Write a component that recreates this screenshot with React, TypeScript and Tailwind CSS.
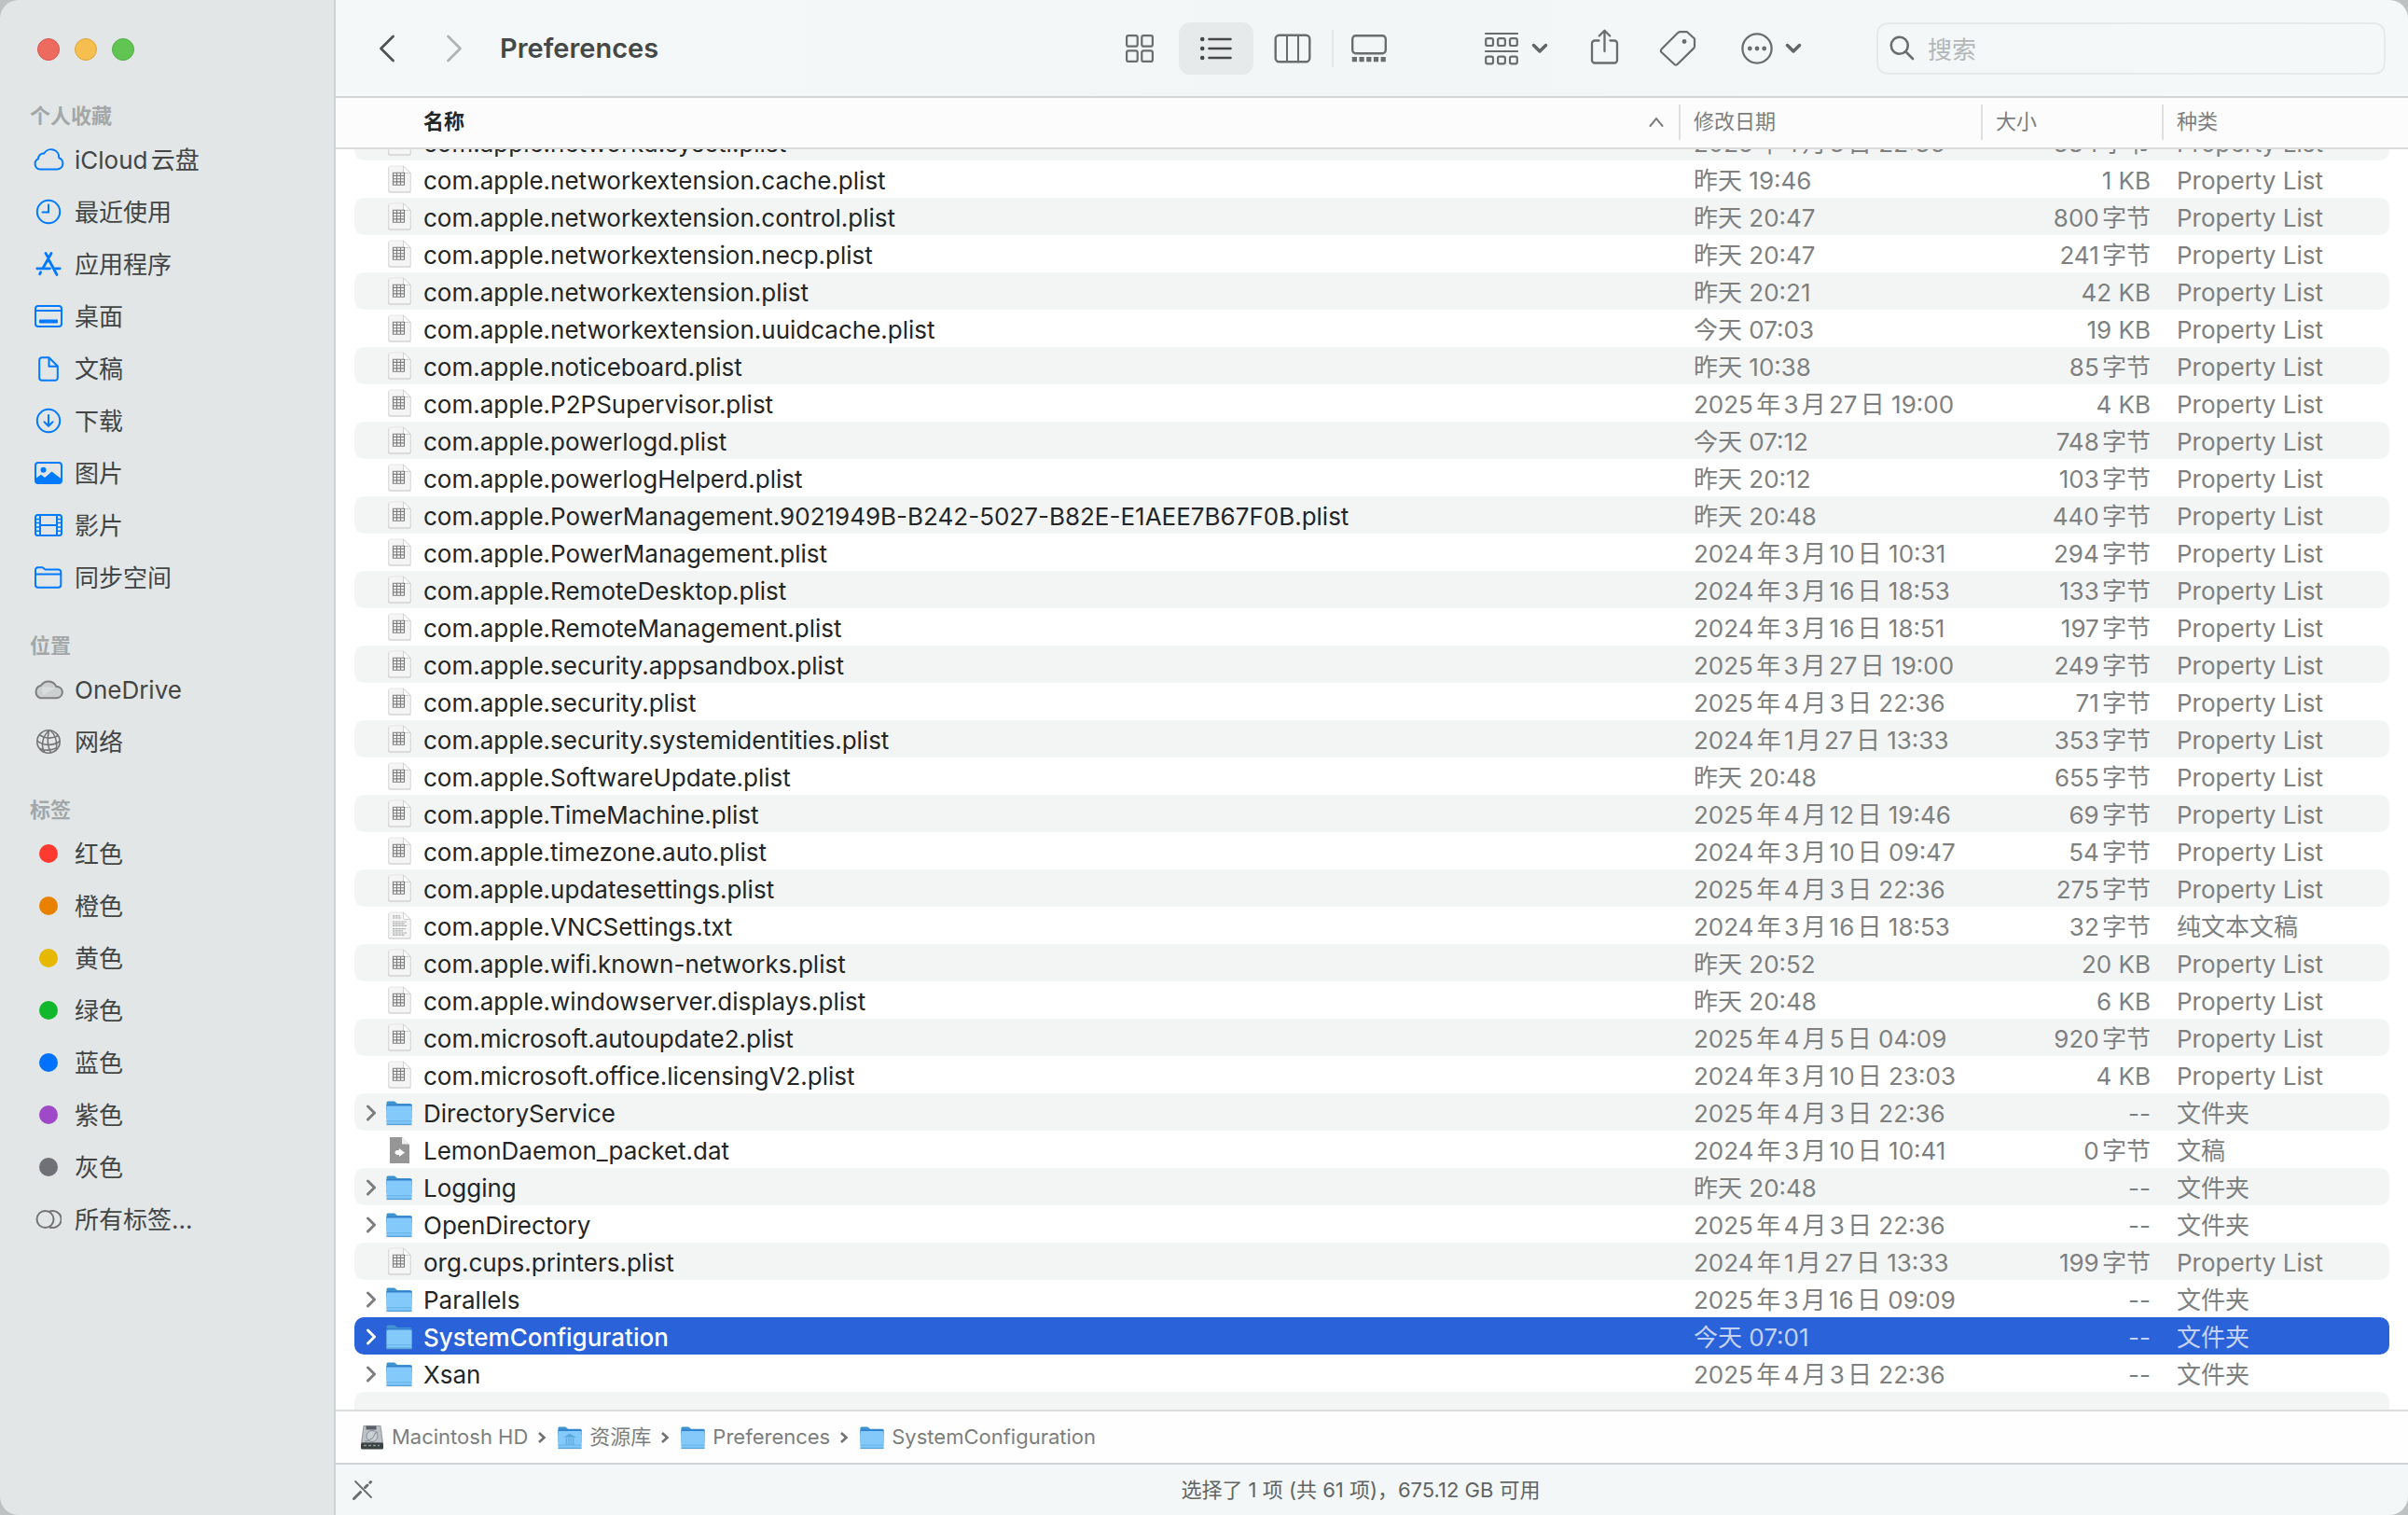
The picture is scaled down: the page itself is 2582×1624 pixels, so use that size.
import { useLayoutEffect, useRef, useState } from "react";
import clsx from "clsx";

type Kind = "plist" | "text" | "data" | "folder";

type FileRow = {
  name: string;
  date: string;
  size: string;
  kind: Kind;
};

const kindLabels: Record<Kind, string> = {
  plist: "Property List",
  text: "纯文本文稿",
  data: "文稿",
  folder: "文件夹",
};

const files: FileRow[] = [
  { name: "com.apple.networkd.sysctl.plist", date: "2025年4月3日 22:36", size: "384字节", kind: "plist" },
  { name: "com.apple.networkextension.cache.plist", date: "昨天 19:46", size: "1 KB", kind: "plist" },
  { name: "com.apple.networkextension.control.plist", date: "昨天 20:47", size: "800字节", kind: "plist" },
  { name: "com.apple.networkextension.necp.plist", date: "昨天 20:47", size: "241字节", kind: "plist" },
  { name: "com.apple.networkextension.plist", date: "昨天 20:21", size: "42 KB", kind: "plist" },
  { name: "com.apple.networkextension.uuidcache.plist", date: "今天 07:03", size: "19 KB", kind: "plist" },
  { name: "com.apple.noticeboard.plist", date: "昨天 10:38", size: "85字节", kind: "plist" },
  { name: "com.apple.P2PSupervisor.plist", date: "2025年3月27日 19:00", size: "4 KB", kind: "plist" },
  { name: "com.apple.powerlogd.plist", date: "今天 07:12", size: "748字节", kind: "plist" },
  { name: "com.apple.powerlogHelperd.plist", date: "昨天 20:12", size: "103字节", kind: "plist" },
  { name: "com.apple.PowerManagement.9021949B-B242-5027-B82E-E1AEE7B67F0B.plist", date: "昨天 20:48", size: "440字节", kind: "plist" },
  { name: "com.apple.PowerManagement.plist", date: "2024年3月10日 10:31", size: "294字节", kind: "plist" },
  { name: "com.apple.RemoteDesktop.plist", date: "2024年3月16日 18:53", size: "133字节", kind: "plist" },
  { name: "com.apple.RemoteManagement.plist", date: "2024年3月16日 18:51", size: "197字节", kind: "plist" },
  { name: "com.apple.security.appsandbox.plist", date: "2025年3月27日 19:00", size: "249字节", kind: "plist" },
  { name: "com.apple.security.plist", date: "2025年4月3日 22:36", size: "71字节", kind: "plist" },
  { name: "com.apple.security.systemidentities.plist", date: "2024年1月27日 13:33", size: "353字节", kind: "plist" },
  { name: "com.apple.SoftwareUpdate.plist", date: "昨天 20:48", size: "655字节", kind: "plist" },
  { name: "com.apple.TimeMachine.plist", date: "2025年4月12日 19:46", size: "69字节", kind: "plist" },
  { name: "com.apple.timezone.auto.plist", date: "2024年3月10日 09:47", size: "54字节", kind: "plist" },
  { name: "com.apple.updatesettings.plist", date: "2025年4月3日 22:36", size: "275字节", kind: "plist" },
  { name: "com.apple.VNCSettings.txt", date: "2024年3月16日 18:53", size: "32字节", kind: "text" },
  { name: "com.apple.wifi.known-networks.plist", date: "昨天 20:52", size: "20 KB", kind: "plist" },
  { name: "com.apple.windowserver.displays.plist", date: "昨天 20:48", size: "6 KB", kind: "plist" },
  { name: "com.microsoft.autoupdate2.plist", date: "2025年4月5日 04:09", size: "920字节", kind: "plist" },
  { name: "com.microsoft.office.licensingV2.plist", date: "2024年3月10日 23:03", size: "4 KB", kind: "plist" },
  { name: "DirectoryService", date: "2025年4月3日 22:36", size: "--", kind: "folder" },
  { name: "LemonDaemon_packet.dat", date: "2024年3月10日 10:41", size: "0字节", kind: "data" },
  { name: "Logging", date: "昨天 20:48", size: "--", kind: "folder" },
  { name: "OpenDirectory", date: "2025年4月3日 22:36", size: "--", kind: "folder" },
  { name: "org.cups.printers.plist", date: "2024年1月27日 13:33", size: "199字节", kind: "plist" },
  { name: "Parallels", date: "2025年3月16日 09:09", size: "--", kind: "folder" },
  { name: "SystemConfiguration", date: "今天 07:01", size: "--", kind: "folder" },
  { name: "Xsan", date: "2025年4月3日 22:36", size: "--", kind: "folder" },
];

/* ---------- Sidebar icons ---------- */

const CloudIcon = () => (
  <svg width="34" height="26" viewBox="0 0 34 26" fill="none" stroke="#007aff" strokeWidth="2">
    <path d="M8 23.5h18.2a6.3 6.3 0 0 0 2.1-12.2A8.6 8.6 0 0 0 12.2 6.600a5.200 5.200 0 0 0-6 5.600A5.900 5.900 0 0 0 8 23.500z" strokeLinejoin="round" />
  </svg>
);

const ClockIcon = () => (
  <svg width="28" height="28" viewBox="0 0 28 28" fill="none" stroke="#007aff" strokeWidth="2" strokeLinecap="round">
    <circle cx="14" cy="14" r="12.200" />
    <path d="M14 6.500V14.500H7.500" />
  </svg>
);

const AppsIcon = () => (
  <svg width="28" height="28" viewBox="0 0 28 28" fill="none" stroke="#007aff" strokeWidth="2.800" strokeLinecap="round">
    <path d="M11 2.500L13.200 6.200M17 2.500L8 18.500M13.800 8.500L23 25.500M1.800 18.800H15.500M21 18.800H26.200M5.600 22.800L4.600 24.800" />
  </svg>
);

const DesktopIcon = () => (
  <svg width="30" height="24" viewBox="0 0 30 24" fill="none" stroke="#007aff" strokeWidth="2">
    <rect x="1" y="1" width="28" height="22" rx="3" />
    <path d="M1 6H29" />
    <rect x="5" y="15.500" width="20" height="4" rx="1" fill="#007aff" stroke="none" />
  </svg>
);

const DocumentIcon = () => (
  <svg width="22" height="27" viewBox="0 0 22 27" fill="none" stroke="#007aff" strokeWidth="2" strokeLinejoin="round">
    <path d="M4 1.200H11.500L20.800 10.500V23a2.800 2.800 0 0 1-2.800 2.800H4A2.800 2.800 0 0 1 1.200 23V4A2.800 2.800 0 0 1 4 1.200z" />
    <path d="M11.500 1.500V10.800H20.500" />
  </svg>
);

const DownloadIcon = () => (
  <svg width="28" height="28" viewBox="0 0 28 28" fill="none" stroke="#007aff" strokeWidth="2" strokeLinecap="round" strokeLinejoin="round">
    <circle cx="14" cy="14" r="12.200" />
    <path d="M14 8V19.500M9.500 15.200L14 19.700L18.500 15.200" />
  </svg>
);

const PictureIcon = () => (
  <svg width="30" height="24" viewBox="0 0 30 24">
    <rect x="1" y="1" width="28" height="22" rx="3" fill="none" stroke="#007aff" strokeWidth="2" />
    <circle cx="9.500" cy="8.800" r="3" fill="#007aff" />
    <path d="M1 18L7 13.800L11 17L18.500 10.500L29 18.500V21.500L27.500 23H2.500L1 21.500z" fill="#007aff" />
  </svg>
);

const MovieIcon = () => (
  <svg width="30" height="24" viewBox="0 0 30 24" fill="none" stroke="#007aff" strokeWidth="2">
    <rect x="1" y="1" width="28" height="22" rx="2.500" />
    <path d="M6 1V23M24 1V23M6 12H24" />
    <path d="M1 5.500H6M1 9.500H6M1 14H6M1 18.200H6M24 5.500H29M24 9.500H29M24 14H29M24 18.200H29" strokeWidth="1.500" />
  </svg>
);

const SidebarFolderIcon = () => (
  <svg width="30" height="24" viewBox="0 0 30 24" fill="none" stroke="#007aff" strokeWidth="2" strokeLinejoin="round">
    <path d="M1 20V4a2.800 2.800 0 0 1 2.800-2.800H8.500L11.500 3.500H25.500a2.800 2.800 0 0 1 2.800 2.800V20a2.800 2.800 0 0 1-2.800 2.800H3.800A2.800 2.800 0 0 1 1 20z" />
    <path d="M1 8.500H28" />
  </svg>
);

const OneDriveIcon = () => (
  <svg width="34" height="22" viewBox="0 0 34 22">
    <path d="M8.200 20.200h17.800a6.100 6.100 0 0 0 1.600-11.900 4 4 0 0 0-2.200-.2A9.300 9.300 0 0 0 9 6.800a7 7 0 0 0-.8 13.400z" fill="#cdd0d1" stroke="#7d7f80" strokeWidth="2" />
    <path d="M10 8L25 9.500L11 17z" fill="#dadddd" />
  </svg>
);

const NetworkIcon = () => (
  <svg width="28" height="28" viewBox="0 0 28 28" fill="none" stroke="#737576" strokeWidth="1.600">
    <circle cx="14" cy="14" r="12.200" />
    <path d="M14.500 2C7 9 6 18 9.500 25.500M14.500 2C12.500 10 13 19 16.500 26M16 2C21 6 23.500 13 22.500 22.500M4.500 7C11 11 18 11 24.500 7.500M2 13C8 18.500 19 19 26 13.500M4.500 21.500C10 23.500 17 23.500 22.500 21" />
  </svg>
);

const AllTagsIcon = () => (
  <svg width="28" height="22" viewBox="0 0 28 22" fill="none" stroke="#737576" strokeWidth="2">
    <circle cx="10.500" cy="11" r="9" />
    <path d="M14.500 3A9 9 0 1 1 14.500 19" />
  </svg>
);

/* ---------- File icons ---------- */

const FolderIcon = ({ className, library }: { className?: string; library?: boolean }) => (
  <svg viewBox="0 0 28 28" className={className}>
    <path d="M0.500 3a1.500 1.500 0 0 1 1.500-1.500H9L12 4H26a1.500 1.500 0 0 1 1.500 1.500V20H0.500z" fill="#3f94cf" />
    <path d="M0.500 6.500H27.500V26.500H0.500z" fill="#9aa3a8" opacity="0.350" transform="translate(0 1)" />
    <rect x="0.500" y="5" width="27" height="6" fill="#2f7fcb" />
    <rect x="0.500" y="6.500" width="27" height="20.500" rx="1.300" fill="#83c9f9" />
    <rect x="0.500" y="22.300" width="27" height="1" fill="#63b0e6" />
    <rect x="0.500" y="25.500" width="27" height="1.500" rx="0.700" fill="#58a5dc" />
    {library && (
      <path
        d="M9 13L14 10.200L19 13zM10 14.500v6M12.700 14.500v6M15.300 14.500v6M18 14.500v6M8.500 21.500H19.500"
        fill="#5aa8de"
        stroke="#5aa8de"
        strokeWidth="1.200"
      />
    )}
  </svg>
);

const PageShape = () => (
  <>
    <path d="M1.500 3a1.500 1.500 0 0 1 1.500-1.500H18L25.500 9V28a1.500 1.500 0 0 1-1.500 1.500H3A1.500 1.500 0 0 1 1.500 28z" fill="#bdbfbf" />
    <path d="M2 2.500a1.500 1.500 0 0 1 1.500-1.500H17.500L25 8.500V27a1.500 1.500 0 0 1-1.500 1.500H3.500A1.500 1.500 0 0 1 2 27z" fill="#f5f5f5" stroke="#dededf" strokeWidth="0.700" />
    <path d="M17.500 1V7a1.500 1.500 0 0 0 1.500 1.500H25z" fill="#fff" stroke="#c4c5c5" strokeWidth="0.800" />
  </>
);

const PlistIcon = () => (
  <svg width="27" height="31" viewBox="0 0 27 31">
    <PageShape />
    <path d="M6.500 8.200H18.500V21.200H6.500zM6.500 11.400H18.500M6.500 14.700H18.500M6.500 17.900H18.500M10.500 8.200V21.200M14.500 8.200V21.200" fill="none" stroke="#7b7c7c" strokeWidth="1.100" />
  </svg>
);

const TextFileIcon = () => (
  <svg width="27" height="31" viewBox="0 0 27 31">
    <PageShape />
    <path
      d="M6 4.800H14M6 7H15.500M6 11H21M6 13.200H19M6 15.400H21M6 18.600H20M6 20.800H17M6 23H21M6 25.200H19"
      stroke="#a9aaaa"
      strokeWidth="1.200"
      strokeDasharray="2.500 0.600"
    />
  </svg>
);

const DataFileIcon = () => (
  <svg width="23" height="30" viewBox="0 0 23 30">
    <path d="M1 1H14L22 9V29H1z" fill="#969696" />
    <path d="M14 1V8.500H22z" fill="#efefef" />
    <path d="M6.500 16.500L8.500 15H11V13L17 17.500L11 22V20H8.500L6.500 18.500z" fill="#fff" />
  </svg>
);

const DiskIcon = () => (
  <svg width="26" height="28" viewBox="0 0 26 28">
    <path d="M3.500 1H22.500L25 20H1z" fill="#9aa1a6" />
    <path d="M4.500 2H21.500L23.500 19H2.500z" fill="#bcc3c7" />
    <rect x="6.500" y="1.500" width="11" height="4" fill="#5a6065" />
    <circle cx="13" cy="12.500" r="6" fill="#c9d0d4" stroke="#858d92" strokeWidth="1" />
    <path d="M19 8C15 8 16 14 12 15.500S7 19 5 17.500" fill="none" stroke="#7c848a" strokeWidth="1" />
    <rect x="1" y="19.500" width="24" height="7" rx="1.500" fill="#3c4244" />
    <path d="M4 22.500H21" stroke="#7fa08c" strokeWidth="1.500" strokeDasharray="3 2" />
  </svg>
);

const fileIcons = {
  plist: <PlistIcon />,
  text: <TextFileIcon />,
  data: <DataFileIcon />,
  folder: <FolderIcon className="size-7" />,
};

/* ---------- Toolbar icons ---------- */

const ChevronDown = () => (
  <svg width="18" height="12" viewBox="0 0 18 12" fill="none" stroke="#636666" strokeWidth="3.500" strokeLinecap="round" strokeLinejoin="round">
    <path d="M2.500 2.500L9 9L15.500 2.500" />
  </svg>
);

const IconViewIcon = () => (
  <svg width="30" height="30" viewBox="0 0 30 30" fill="none" stroke="#6a6d6d" strokeWidth="2.200">
    <rect x="1.100" y="1.100" width="11.600" height="11.600" rx="2" />
    <rect x="17.300" y="1.100" width="11.600" height="11.600" rx="2" />
    <rect x="1.100" y="17.300" width="11.600" height="11.600" rx="2" />
    <rect x="17.300" y="17.300" width="11.600" height="11.600" rx="2" />
  </svg>
);

const ListViewIcon = () => (
  <svg width="36" height="26" viewBox="0 0 36 26" fill="#454747" stroke="#454747">
    <path d="M10.500 3H33.500M10.500 13H33.500M10.500 23H33.500" strokeWidth="2.600" strokeLinecap="round" />
    <g stroke="none">
      <circle cx="3.200" cy="3" r="2.300" />
      <circle cx="3.200" cy="13" r="2.300" />
      <circle cx="3.200" cy="23" r="2.300" />
    </g>
  </svg>
);

const ColumnViewIcon = () => (
  <svg width="40" height="32" viewBox="0 0 40 32" fill="none" stroke="#6a6d6d" strokeWidth="2.400">
    <rect x="1.700" y="1.700" width="36.600" height="28.600" rx="4" />
    <path d="M14 2V30M26 2V30" strokeWidth="2" />
  </svg>
);

const GalleryViewIcon = () => (
  <svg width="38" height="30" viewBox="0 0 38 30" fill="none">
    <rect x="1.200" y="1.200" width="35.600" height="19" rx="3.500" stroke="#6a6d6d" strokeWidth="2.400" />
    <path d="M.8 24h5.200v5.200H.8zM8.500 24h5.200v5.200H8.500zM16.200 24h5.200v5.200h-5.200zM23.900 24h5.200v5.200h-5.200zM31.600 24h5.200v5.200h-5.200z" fill="#6a6d6d" />
  </svg>
);

const GroupIcon = () => (
  <svg width="36" height="36" viewBox="0 0 36 36" fill="none" stroke="#6a6d6d" strokeWidth="2.200" strokeLinecap="round">
    <path d="M1 2H35M1 21H35" />
    <rect x="1.200" y="7.200" width="7.800" height="7.800" rx="1.800" />
    <rect x="14.100" y="7.200" width="7.800" height="7.800" rx="1.800" />
    <rect x="27" y="7.200" width="7.800" height="7.800" rx="1.800" />
    <rect x="1.200" y="26.600" width="7.800" height="7.800" rx="1.800" />
    <rect x="14.100" y="26.600" width="7.800" height="7.800" rx="1.800" />
    <rect x="27" y="26.600" width="7.800" height="7.800" rx="1.800" />
  </svg>
);

const ShareIcon = () => (
  <svg width="32" height="38" viewBox="0 0 32 38" fill="none" stroke="#6a6d6d" strokeWidth="2.300" strokeLinecap="round" strokeLinejoin="round">
    <path d="M10.500 12.500H6a3 3 0 0 0-3 3V33.500a3 3 0 0 0 3 3H27a3 3 0 0 0 3-3V15.500a3 3 0 0 0-3-3H22.500" />
    <path d="M16.500 24V1.800M10.800 7.500L16.500 1.800L22.200 7.500" />
  </svg>
);

const TagIcon = () => (
  <svg width="40" height="38" viewBox="0 0 40 38" fill="none" stroke="#6a6d6d" strokeWidth="2.200" strokeLinejoin="round">
    <path d="M20.500 1.800Q21.300 1.200 22.500 1.200H30L38 8.500V16.500Q38 17.700 37.200 18.600L19.500 36Q18 37.200 16.500 36L2.500 23Q1.200 21.500 2.500 19.800z" />
    <circle cx="27" cy="11.500" r="2.400" fill="#6a6d6d" stroke="none" />
  </svg>
);

const MoreIcon = () => (
  <svg width="36" height="36" viewBox="0 0 36 36">
    <circle cx="18" cy="18" r="15.600" fill="none" stroke="#6a6d6d" strokeWidth="2.300" />
    <g fill="#6a6d6d">
      <circle cx="10.300" cy="18" r="2.400" />
      <circle cx="18" cy="18" r="2.400" />
      <circle cx="25.700" cy="18" r="2.400" />
    </g>
  </svg>
);

/* ---------- Sidebar ---------- */

const sections = [
  {
    title: "个人收藏",
    items: [
      { label: "iCloud云盘", icon: <CloudIcon /> },
      { label: "最近使用", icon: <ClockIcon /> },
      { label: "应用程序", icon: <AppsIcon /> },
      { label: "桌面", icon: <DesktopIcon /> },
      { label: "文稿", icon: <DocumentIcon /> },
      { label: "下载", icon: <DownloadIcon /> },
      { label: "图片", icon: <PictureIcon /> },
      { label: "影片", icon: <MovieIcon /> },
      { label: "同步空间", icon: <SidebarFolderIcon /> },
    ],
  },
  {
    title: "位置",
    items: [
      { label: "OneDrive", icon: <OneDriveIcon /> },
      { label: "网络", icon: <NetworkIcon /> },
    ],
  },
  {
    title: "标签",
    items: [
      { label: "红色", icon: <span className="size-5 rounded-full bg-[#fc3a2f]" /> },
      { label: "橙色", icon: <span className="size-5 rounded-full bg-[#e88000]" /> },
      { label: "黄色", icon: <span className="size-5 rounded-full bg-[#e6b800]" /> },
      { label: "绿色", icon: <span className="size-5 rounded-full bg-[#11b82c]" /> },
      { label: "蓝色", icon: <span className="size-5 rounded-full bg-[#0072fb]" /> },
      { label: "紫色", icon: <span className="size-5 rounded-full bg-[#9f49c9]" /> },
      { label: "灰色", icon: <span className="size-5 rounded-full bg-[#707176]" /> },
      { label: "所有标签...", icon: <AllTagsIcon /> },
    ],
  },
];

function Sidebar() {
  return (
    <aside className="flex w-[360px] shrink-0 flex-col border-r-2 border-[#cfd3d3] bg-[#e2e6e6]">
      <div className="flex h-[105px] shrink-0 items-center gap-4 pl-10">
        <button aria-label="关闭" className="size-6 rounded-full border border-[#d5574c] bg-[#ed6a5e]" />
        <button aria-label="最小化" className="size-6 rounded-full border border-[#dba53a] bg-[#f5bf4f]" />
        <button aria-label="缩放" className="size-6 rounded-full border border-[#50ad42] bg-[#61c554]" />
      </div>
      <nav className="flex flex-col gap-[26px]">
        {sections.map((section) => (
          <section key={section.title}>
            <h2 className="flex h-[38px] items-center pl-8 text-[22px] font-bold text-[#a3a7a7]">{section.title}</h2>
            <ul>
              {section.items.map((item) => (
                <li key={item.label}>
                  <a href="#" className="flex h-14 items-center gap-2.5 pl-[34px] text-[26px] text-[#434545]">
                    <span className="flex w-9 justify-center">{item.icon}</span>
                    {item.label}
                  </a>
                </li>
              ))}
            </ul>
          </section>
        ))}
      </nav>
    </aside>
  );
}

/* ---------- Toolbar ---------- */

const views = [
  { id: "icon", label: "图标", icon: <IconViewIcon /> },
  { id: "list", label: "列表", icon: <ListViewIcon /> },
  { id: "column", label: "分栏", icon: <ColumnViewIcon /> },
  { id: "gallery", label: "画廊", icon: <GalleryViewIcon /> },
];

function Toolbar() {
  const [view, setView] = useState("list");

  return (
    <header className="flex h-[105px] shrink-0 items-center border-b-2 border-[#d3d6d7] bg-linear-to-r from-[#f4f8f9] via-[#f2f6f7] to-[#f4f8f9] pr-6 pl-[46px]">
      <button aria-label="后退">
        <svg width="18" height="30" viewBox="0 0 18 30" fill="none" stroke="#505353" strokeWidth="2.800" strokeLinecap="round" strokeLinejoin="round">
          <path d="M15.500 2L2.500 15L15.500 28" />
        </svg>
      </button>
      <button aria-label="前进" disabled className="ml-[54px]">
        <svg width="18" height="30" viewBox="0 0 18 30" fill="none" stroke="#b0b3b4" strokeWidth="2.800" strokeLinecap="round" strokeLinejoin="round">
          <path d="M2.500 2L15.500 15L2.500 28" />
        </svg>
      </button>
      <h1 className="ml-10 text-[29px] font-semibold text-[#454848]">Preferences</h1>

      <div className="ml-auto flex items-center gap-0.5">
        {views.map((item) => (
          <div key={item.id} className="flex items-center">
            {item.id === "gallery" && <span className="-mr-0.5 h-10 w-0.5 bg-[#e3e7e8]" />}
            <button
              aria-label={item.label}
              onClick={() => setView(item.id)}
              className={clsx("flex h-14 w-20 items-center justify-center rounded-xl", view === item.id && "bg-[#e7eaeb]")}
            >
              {item.icon}
            </button>
          </div>
        ))}
      </div>

      <div className="ml-20 flex items-center gap-10">
        <button aria-label="群组" className="flex w-[76px] items-center justify-between px-1">
          <GroupIcon />
          <ChevronDown />
        </button>
        <button aria-label="共享" className="-mt-1">
          <ShareIcon />
        </button>
        <button aria-label="标签" className="flex w-[46px] justify-center">
          <TagIcon />
        </button>
        <button aria-label="更多" className="flex w-[74px] items-center justify-between px-1">
          <MoreIcon />
          <ChevronDown />
        </button>
      </div>

      <label className="ml-[76px] flex h-14 w-[546px] items-center gap-3.5 rounded-xl border-2 border-[#e6eaeb] pl-3">
        <svg width="27" height="27" viewBox="0 0 27 27" fill="none" stroke="#6a6d6d" strokeWidth="2.600" strokeLinecap="round">
          <circle cx="10.800" cy="10.800" r="9" />
          <path d="M17.500 17.500L25 25" />
        </svg>
        <input
          type="search"
          placeholder="搜索"
          aria-label="搜索"
          className="min-w-0 flex-1 bg-transparent pt-1 text-[26px] text-[#434545] outline-none placeholder:text-[#b4b7b8]"
        />
      </label>
    </header>
  );
}

/* ---------- File list ---------- */

const columns = "grid grid-cols-[minmax(0,1fr)_324px_194px_244px] items-center";

function FileList() {
  const [selected, setSelected] = useState("SystemConfiguration");
  const rows = useRef<HTMLTableSectionElement>(null);

  // Start scrolled part of a row down
  useLayoutEffect(() => {
    if (rows.current) rows.current.scrollTop = 28;
  }, []);

  return (
    <table className="flex min-h-0 flex-1 flex-col bg-white text-[26px]">
      <thead className="block shrink-0 border-b-2 border-[#dadbdb] bg-[#fcfcfc] px-5 text-[22px] text-[#7d7e7e]">
        <tr className={clsx(columns, "h-[53px] pb-0.5")}>
          <th className="flex items-center justify-between pr-4 pl-[74px] text-left font-semibold text-[#252626]">
            <button>名称</button>
            <svg width="16" height="12" viewBox="0 0 16 12" fill="none" stroke="#7d7e7e" strokeWidth="2" strokeLinecap="round">
              <path d="M1.500 10L8 2L14.500 10" />
            </svg>
          </th>
          <th className="flex h-[38px] items-center border-l-2 border-[#dfe0e0] pl-3.5 font-normal">
            <button>修改日期</button>
          </th>
          <th className="flex h-[38px] items-center border-l-2 border-[#dfe0e0] pl-3.5 font-normal">
            <button>大小</button>
          </th>
          <th className="flex h-[38px] items-center border-l-2 border-[#dfe0e0] pl-3.5 font-normal">
            <button>种类</button>
          </th>
        </tr>
      </thead>
      <tbody ref={rows} className="block min-h-0 flex-1 overflow-y-auto px-5 [scrollbar-width:none]">
        {files.map((file, index) => {
          const active = file.name === selected;
          return (
            <tr
              key={file.name}
              onClick={() => setSelected(file.name)}
              className={clsx(
                columns,
                "h-10 rounded-[10px]",
                active ? "bg-[#2962d9] text-[#c3d2f5]" : "text-[#7e7f7f]",
                !active && index % 2 === 0 && "bg-[#f3f5f5]"
              )}
            >
              <td className="flex h-10 items-center pl-3">
                <span className="flex w-3">
                  {file.kind === "folder" && (
                    <button aria-label="展开">
                      <svg
                        width="12"
                        height="18"
                        viewBox="0 0 12 18"
                        fill="none"
                        strokeWidth="3"
                        strokeLinecap="round"
                        strokeLinejoin="round"
                        className={active ? "stroke-white" : "stroke-[#7c7d7d]"}
                      >
                        <path d="M2.500 2L9.500 9L2.500 16" />
                      </svg>
                    </button>
                  )}
                </span>
                <span className="ml-2 flex w-8 justify-center">{fileIcons[file.kind]}</span>
                <span className={clsx("ml-2.5 truncate pt-0.5", active ? "font-medium text-white" : "text-[#242525]")}>
                  {file.name}
                </span>
              </td>
              <td className="pt-0.5 pl-4">{file.date}</td>
              <td className="pt-0.5 pr-3 text-right">{file.size}</td>
              <td className="pt-0.5 pl-4">{kindLabels[file.kind]}</td>
            </tr>
          );
        })}
        <tr aria-hidden="true" className="block h-10 rounded-[10px] bg-[#f3f5f5]" />
      </tbody>
    </table>
  );
}

/* ---------- Path and status bars ---------- */

const path = [
  { label: "Macintosh HD", icon: <DiskIcon /> },
  { label: "资源库", icon: <FolderIcon library className="size-[26px]" /> },
  { label: "Preferences", icon: <FolderIcon className="size-[26px]" /> },
  { label: "SystemConfiguration", icon: <FolderIcon className="size-[26px]" /> },
];

function PathBar() {
  return (
    <nav className="flex h-[57px] shrink-0 items-center border-t-2 border-[#dadddd] bg-[#fefefe] pl-[26px] text-[22px] text-[#7c7e7e]">
      {path.map((part, index) => (
        <div key={part.label} className="flex items-center">
          {index > 0 && (
            <svg width="10" height="14" viewBox="0 0 10 14" fill="none" stroke="#6f7171" strokeWidth="2.600" className="mr-3 ml-2.5">
              <path d="M2 2L7.500 7L2 12" />
            </svg>
          )}
          <a href="#" className="flex items-center gap-2">
            {part.icon}
            {part.label}
          </a>
        </div>
      ))}
    </nav>
  );
}

function StatusBar() {
  return (
    <footer className="flex h-[56px] shrink-0 items-center border-t-2 border-[#cfd4d6] bg-[#f3f7f8] pr-16 pl-[18px] text-[22px] text-[#616464]">
      <button aria-label="自定">
        <svg width="22" height="22" viewBox="0 0 22 22" stroke="#6a6d6d" strokeLinecap="round">
          <path d="M3 2L20 19" strokeWidth="1.800" />
          <path d="M1.500 20.500L8.500 13.500M13.500 8.500L16 6M18.800 3.200L19.500 2.500" strokeWidth="3" />
        </svg>
      </button>
      <p className="flex-1 text-center">选择了 1 项 (共 61 项)，675.12 GB 可用</p>
    </footer>
  );
}

export default function App() {
  return (
    <div className="h-screen bg-[#bfc2c2]">
      <div className="flex h-full overflow-hidden rounded-[20px] font-[Inter,'Noto_Sans_CJK_SC',sans-serif] [text-autospace:normal]">
        <Sidebar />
        <main className="flex min-w-0 flex-1 flex-col">
          <Toolbar />
          <FileList />
          <PathBar />
          <StatusBar />
        </main>
      </div>
    </div>
  );
}
